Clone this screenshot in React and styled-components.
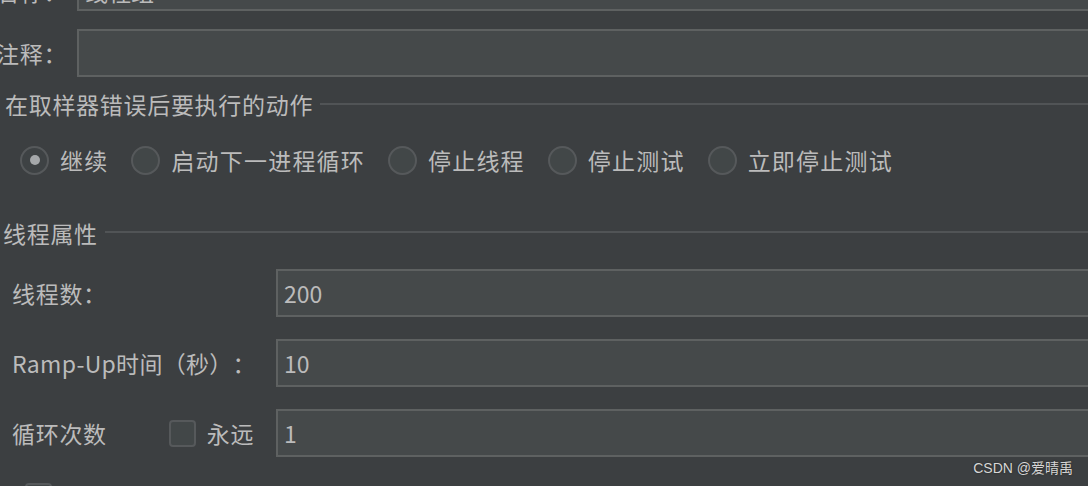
import React from 'react';
import styled, {createGlobalStyle} from 'styled-components';

const GlobalStyle = createGlobalStyle`
  html, body {
    margin: 0;
    padding: 0;
    background: #3c3f41;
  }
  * {
    box-sizing: border-box;
  }
`;

const Viewport = styled.div`
  position: relative;
  width: 1088px;
  height: 486px;
  overflow: hidden;
  background: #3c3f41;
  font-family: "Noto Sans CJK SC", "Noto Sans", sans-serif;
  font-size: 23px;
  letter-spacing: 0.7px;
  text-spacing-trim: space-all;
  color: #bbbbbb;
`;

const Panel = styled.div`
  display: flex;
  flex-direction: column;
  width: 1120px;
  margin-top: -37px;
`;

const FieldRow = styled.div`
  display: flex;
  align-items: center;
  height: 48px;
  margin-top: ${({top}) => top || 0}px;
  padding-left: ${({indent}) => indent || 0}px;
`;

const Label = styled.div`
  width: ${({width}) => width}px;
  margin-left: ${({left}) => left || 0}px;
  flex-shrink: 0;
  white-space: nowrap;
  line-height: 1;
  letter-spacing: ${({tight}) => (tight ? '0.3px' : 'inherit')};
`;

const Field = styled.div`
  flex: 1;
  height: 48px;
  display: flex;
  align-items: center;
  padding-left: 6px;
  padding-top: ${({shift}) => shift || 0}px;
  background: #45494a;
  border: 2px solid #5e6161;
  color: #bbbbbb;
  letter-spacing: 0;
  line-height: 1;
`;

const TopLabel = styled(Label)`
  padding-top: ${({shift}) => shift || 0}px;
`;

const Section = styled.div`
  display: flex;
  align-items: center;
  gap: 7px;
  height: 30px;
  margin-top: ${({top}) => top}px;
  padding-left: ${({indent}) => indent}px;
  white-space: nowrap;
  line-height: 1;
`;

const SectionLine = styled.div`
  flex: 1;
  height: 2px;
  background: #515456;
  transform: translateY(${({shift}) => shift || 0}px);
`;

const RadioRow = styled.div`
  display: flex;
  align-items: center;
  height: 30px;
  margin-top: 26px;
  padding-left: 20px;
`;

const RadioItem = styled.div`
  display: flex;
  align-items: center;
  gap: 11px;
  margin-right: 23px;
  white-space: nowrap;
  line-height: 1;
  letter-spacing: 1.2px;
`;

const RadioCircle = styled.div`
  width: 29px;
  height: 29px;
  border-radius: 50%;
  border: 2px solid #56595b;
  background: ${({checked}) => (checked ? '#3e4244' : '#424748')};
  display: flex;
  align-items: center;
  justify-content: center;

  &::after {
    content: '';
    display: ${({checked}) => (checked ? 'block' : 'none')};
    width: 10px;
    height: 10px;
    border-radius: 50%;
    background: #a5a8aa;
  }
`;

const CheckBox = styled.div`
  width: 27px;
  height: 27px;
  border-radius: 4px;
  border: 2px solid #56595b;
  background: #424748;
  flex-shrink: 0;
  margin-top: ${({top}) => top || 0}px;
  margin-left: ${({left}) => left || 0}px;
`;

const LoopLabel = styled.div`
  display: flex;
  align-items: center;
  width: 264px;
  flex-shrink: 0;
  white-space: nowrap;
  line-height: 1;
`;

const ForeverText = styled.span`
  margin-left: 11px;
`;

const Watermark = styled.div`
  position: absolute;
  right: 15px;
  bottom: 9px;
  font-family: "Liberation Sans", "Noto Sans CJK SC", sans-serif;
  font-size: 14px;
  letter-spacing: 0;
  color: #d6d6d6;
  text-shadow: 0 0 2px #222;
`;

const actions = [
    {name: '继续', checked: true},
    {name: '启动下一进程循环'},
    {name: '停止线程'},
    {name: '停止测试'},
    {name: '立即停止测试'},
];

const App = () => {
    return (
        <Viewport>
            <GlobalStyle/>
            <Panel>
                <FieldRow>
                    <TopLabel width={81} left={-4} shift={8}>名称：</TopLabel>
                    <Field shift={8}>线程组</Field>
                </FieldRow>
                <FieldRow top={18}>
                    <Label width={81} left={-4}>注释：</Label>
                    <Field/>
                </FieldRow>
                <Section top={12} indent={5}>
                    在取样器错误后要执行的动作
                    <SectionLine/>
                </Section>
                <RadioRow>
                    {actions.map((a) => (
                        <RadioItem key={a.name}>
                            <RadioCircle checked={a.checked}/>
                            {a.name}
                        </RadioItem>
                    ))}
                </RadioRow>
                <Section top={43} indent={3}>
                    线程属性
                    <SectionLine shift={-1}/>
                </Section>
                <FieldRow top={21} indent={12}>
                    <Label width={264}>线程数：</Label>
                    <Field>200</Field>
                </FieldRow>
                <FieldRow top={22} indent={12}>
                    <Label width={264} tight>Ramp-Up时间（秒）：</Label>
                    <Field>10</Field>
                </FieldRow>
                <FieldRow top={22} indent={12}>
                    <LoopLabel>
                        循环次数
                        <CheckBox left={62}/>
                        <ForeverText>永远</ForeverText>
                    </LoopLabel>
                    <Field>1</Field>
                </FieldRow>
                <CheckBox top={26} left={25}/>
            </Panel>
            <Watermark>CSDN @爱晴禹</Watermark>
        </Viewport>
    );
};

export default App;
